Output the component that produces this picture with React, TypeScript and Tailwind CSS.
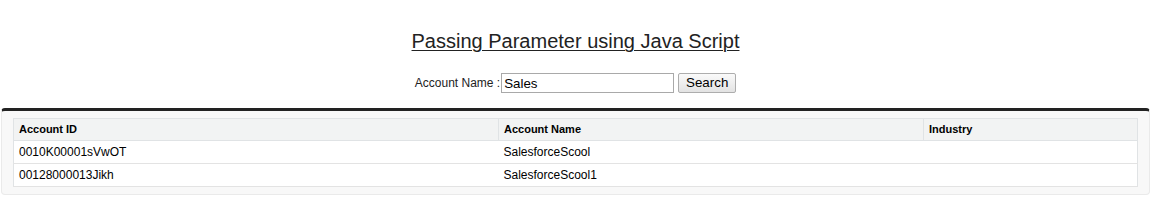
import React from 'react';

interface AccountRow {
  id: string;
  name: string;
  industry: string;
}

const ROWS: AccountRow[] = [
  { id: '0010K00001sVwOT', name: 'SalesforceScool', industry: '' },
  { id: '00128000013Jikh', name: 'SalesforceScool1', industry: '' },
];

export default function App() {
  return (
    <div className="min-h-[220px] bg-white font-['Liberation_Sans',Arial,sans-serif] text-[#222]">
      <h1 className="pt-[30px] text-center text-[20px] leading-[23px] font-normal text-[#222]">
        <span className="underline decoration-1 underline-offset-[2px]">Passing Parameter using Java Script</span>
      </h1>

      <div className="mt-[20px] flex items-center justify-center">
        <label className="text-[12px] leading-[20px] text-[#222]">Account Name :</label>
        <input
          className="ml-px h-[20px] w-[173px] border border-[#a9a9a9] bg-white px-[2px] text-[13.33px] leading-[18px] text-black outline-none"
          defaultValue="Sales"
        />
        <button className="ml-[4px] h-[20px] w-[58px] rounded-[2px] border border-[#adadad] bg-gradient-to-b from-[#fafafa] to-[#e3e3e3] text-[13.33px] leading-[18px] text-black">
          Search
        </button>
      </div>

      <div className="mx-px mt-[15px] rounded-[4px] border border-t-[3px] border-[#eaeaea] border-t-[#222] bg-[#f8f8f8] px-[11px] pt-[7px] pb-[7px]">
        <table className="w-full table-fixed border-collapse border border-[#e0e3e5] bg-white text-left">
          <colgroup>
            <col className="w-[485px]" />
            <col className="w-[425px]" />
            <col />
          </colgroup>
          <thead>
            <tr className="h-[22px] bg-[#f2f3f3]">
              <th className="border-r border-b border-[#e0e3e5] px-[5px] text-[11px] font-bold text-black">Account ID</th>
              <th className="border-r border-b border-[#e0e3e5] px-[5px] text-[11px] font-bold text-black">Account Name</th>
              <th className="border-b border-[#e0e3e5] px-[5px] text-[11px] font-bold text-black">Industry</th>
            </tr>
          </thead>
          <tbody>
            {ROWS.map((row) => (
              <tr key={row.id} className="h-[23px] border-b border-[#e3e3e3]">
                <td className="px-[5px] text-[12px] text-[#000]">{row.id}</td>
                <td className="px-[5px] text-[12px] text-[#000]">{row.name}</td>
                <td className="px-[5px] text-[12px] text-[#000]">{row.industry}</td>
              </tr>
            ))}
          </tbody>
        </table>
      </div>
    </div>
  );
}
